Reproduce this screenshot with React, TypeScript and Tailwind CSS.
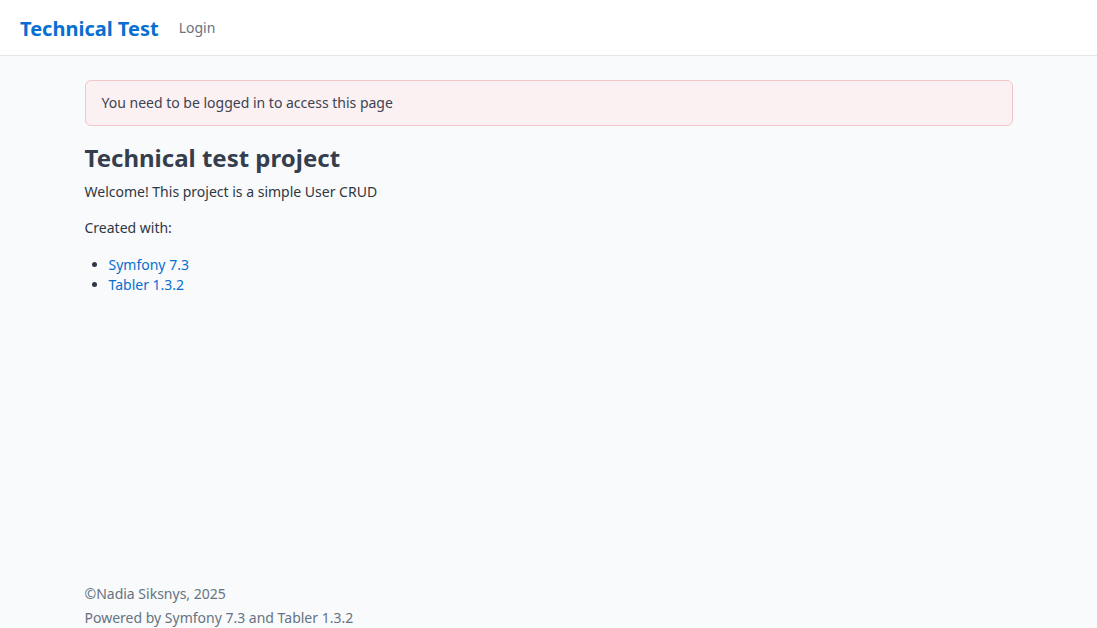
import React from 'react';

const App: React.FC = () => {
  return (
    <div className="flex h-[628px] flex-col overflow-hidden bg-[#f9fafb] text-sm text-[#1f2937]" style={{ fontFamily: '"Noto Sans", sans-serif' }}>
      {/* top navbar */}
      <header className="flex h-[56px] items-center border-b border-[#e5e7eb] bg-white px-5">
        <a className="mr-[20px] pt-[2px] text-xl font-bold text-[#066fd1]">Technical Test</a>
        <a className="text-sm text-[#6b7280]">Login</a>
      </header>

      <main className="flex-1">
        <div className="mx-auto w-[928px] pt-6">
          <div className="mb-4 rounded-[6px] border border-[#f2c6c9] bg-[#fbf1f2] px-4 py-[12px] leading-5 text-[#3b4351]">
            You need to be logged in to access this page
          </div>
          <h1 className="mb-2 text-2xl leading-8 font-bold text-[#343e4f]">Technical test project</h1>
          <p className="mb-4 leading-5 text-[#2f3744]">Welcome! This project is a simple User CRUD</p>
          <p className="mb-[17px] leading-5 text-[#2f3744]">Created with:</p>
          <ul className="list-disc pl-6 leading-5 marker:text-[#2f3744]">
            <li><a className="text-[#066fd1]">Symfony 7.3</a></li>
            <li><a className="text-[#066fd1]">Tabler 1.3.2</a></li>
          </ul>
        </div>
      </main>

      <footer className="mx-auto flex w-[928px] flex-col gap-1 leading-5 text-[#667382]">
        <p>©Nadia Siksnys, 2025</p>
        <p>Powered by Symfony 7.3 and Tabler 1.3.2</p>
      </footer>
    </div>
  );
};

export default App;
